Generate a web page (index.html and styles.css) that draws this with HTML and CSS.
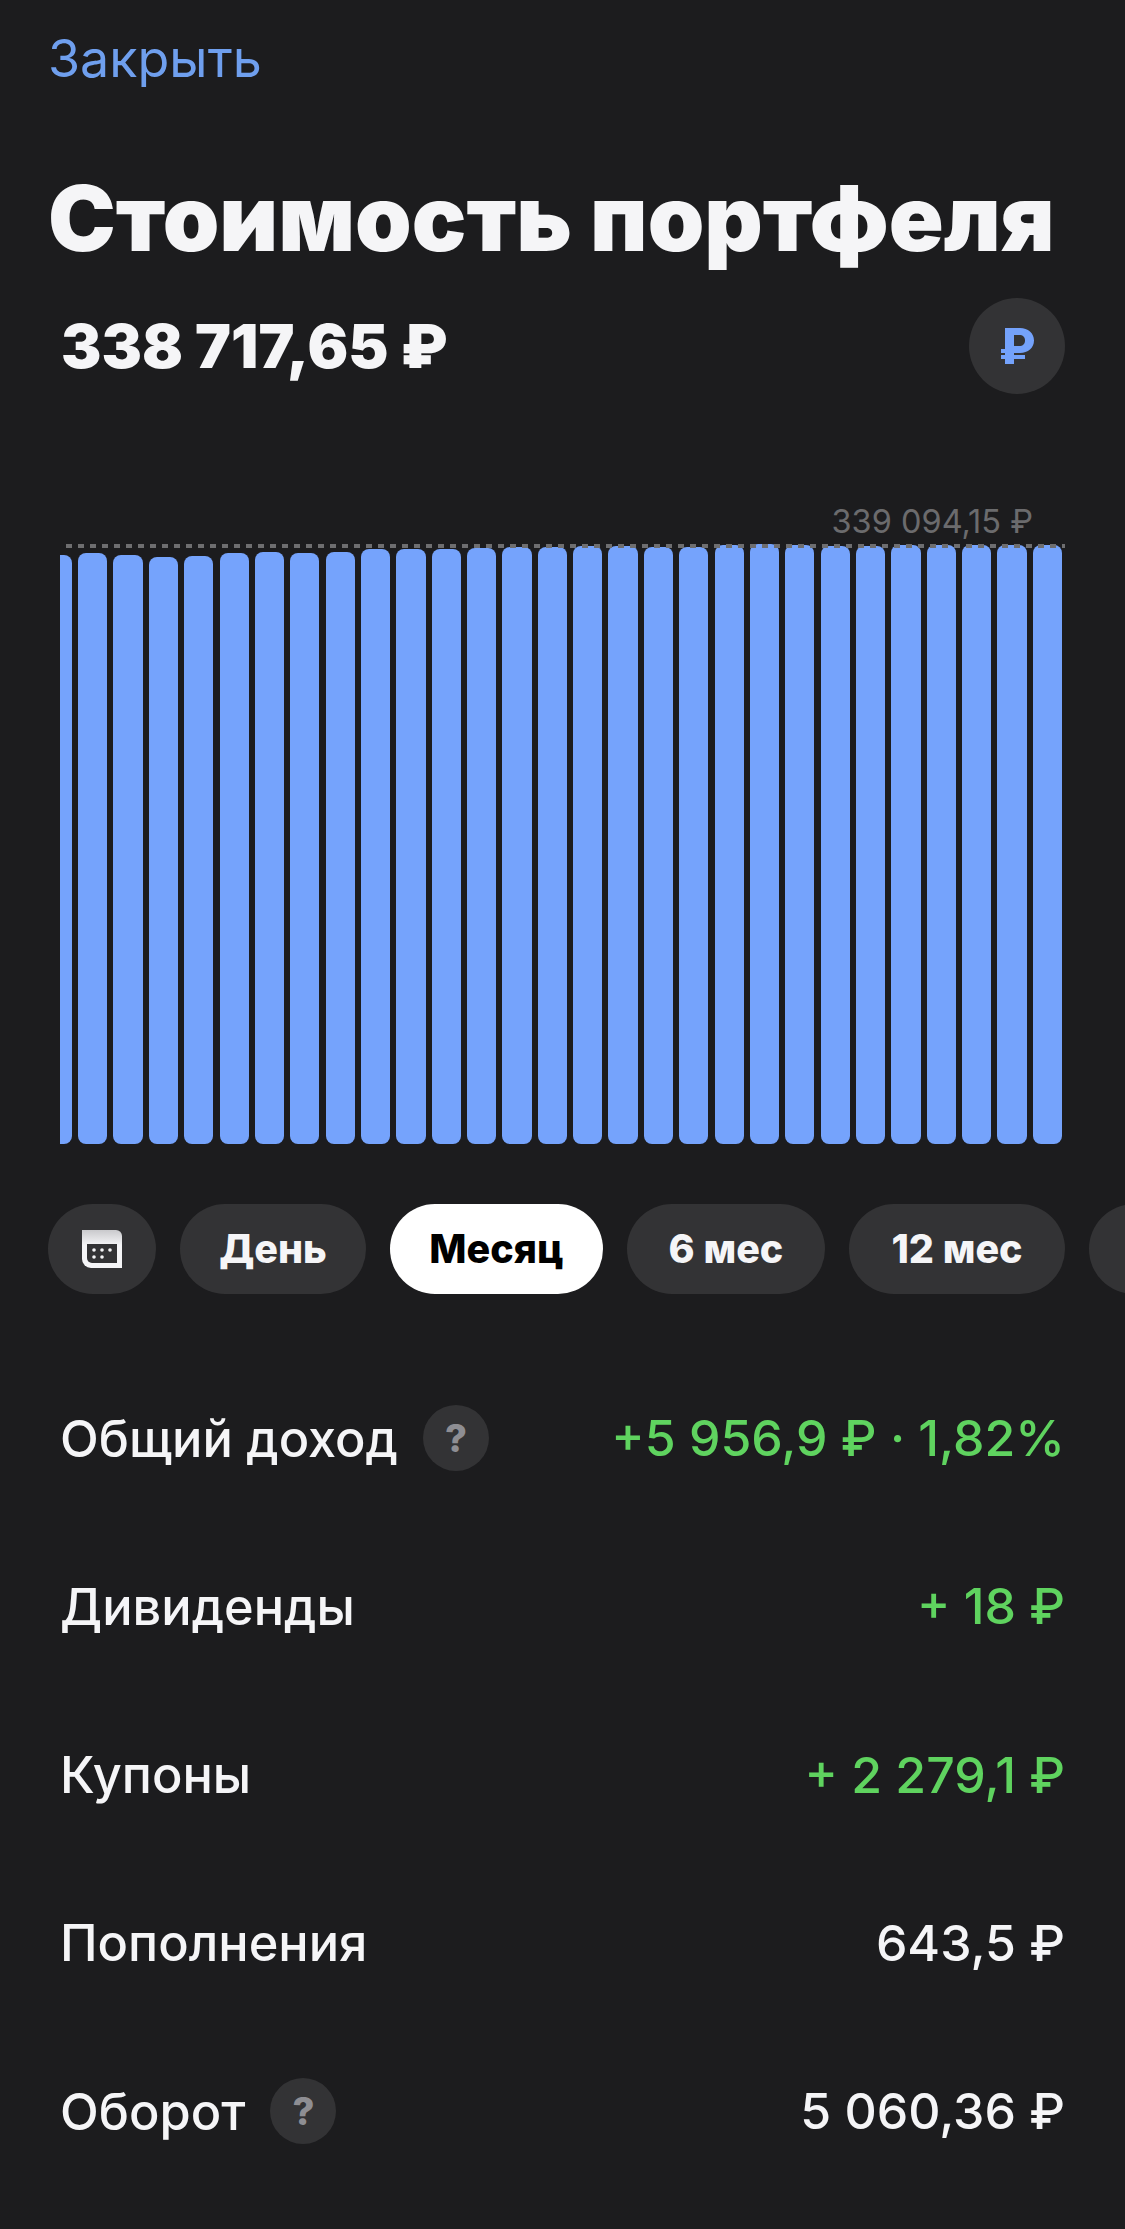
FILE: index.html
```html
<!DOCTYPE html>
<html lang="ru">

<head>
    <meta charset="utf-8">
    <title>Стоимость портфеля</title>
    <link rel="stylesheet" href="styles.css">
</head>

<body>
    <div class="page">
        <div class="top-bar"><span class="close-link">Закрыть</span></div>

        <h1 class="title">Стоимость портфеля</h1>

        <div class="summary">
            <span class="summary-value">338 717,65 ₽</span>
            <span class="currency-btn">
                <svg width="33" height="36" viewBox="0 0 33 36">
                    <path fill="#74a2fb" fill-rule="evenodd" d="M4 0h15c8 0 14 5 14 12.500S27 25 19 25h-6v2h11v4H13v5H4v-5H0v-4h4v-2H0v-4h4zM13 7v11h5c4 0 6-2 6-5.500S22 7 18 7z"/>
                </svg>
            </span>
        </div>

        <div class="chart-label">339 094,15 ₽</div>
        <div class="chart">
            <div class="bars">
                <div class="bar" style="height: 589px"></div>
                <div class="bar" style="height: 591px"></div>
                <div class="bar" style="height: 589px"></div>
                <div class="bar" style="height: 587px"></div>
                <div class="bar" style="height: 588.500px"></div>
                <div class="bar" style="height: 591px"></div>
                <div class="bar" style="height: 592px"></div>
                <div class="bar" style="height: 591px"></div>
                <div class="bar" style="height: 592px"></div>
                <div class="bar" style="height: 595px"></div>
                <div class="bar" style="height: 595px"></div>
                <div class="bar" style="height: 595px"></div>
                <div class="bar" style="height: 596px"></div>
                <div class="bar" style="height: 597px"></div>
                <div class="bar" style="height: 597px"></div>
                <div class="bar" style="height: 598px"></div>
                <div class="bar" style="height: 598px"></div>
                <div class="bar" style="height: 597px"></div>
                <div class="bar" style="height: 597px"></div>
                <div class="bar" style="height: 599px"></div>
                <div class="bar" style="height: 600px"></div>
                <div class="bar" style="height: 599px"></div>
                <div class="bar" style="height: 598px"></div>
                <div class="bar" style="height: 598px"></div>
                <div class="bar" style="height: 599px"></div>
                <div class="bar" style="height: 599px"></div>
                <div class="bar" style="height: 599px"></div>
                <div class="bar" style="height: 599px"></div>
                <div class="bar" style="height: 599px"></div>
            </div>
            <div class="max-line"></div>
        </div>

        <div class="periods">
            <div class="pill pill-icon">
                <svg width="40" height="38" viewBox="0 0 40 38">
                    <defs>
                        <linearGradient id="calTop" x1="0" y1="0" x2="0" y2="1">
                            <stop offset="0" stop-color="#c9c9cc"/>
                            <stop offset="0.4" stop-color="#f5f5f7"/>
                        </linearGradient>
                    </defs>
                    <path fill="url(#calTop)" d="M0 0h34a6 6 0 0 1 6 6v32H9a9 9 0 0 1-9-9z"/>
                    <path fill="#333335" d="M5 14h30v19H10a5 5 0 0 1-5-5z"/>
                    <g fill="#f5f5f7">
                        <circle cx="12" cy="20" r="1.800"/>
                        <circle cx="20" cy="20" r="1.800"/>
                        <circle cx="28" cy="20" r="1.800"/>
                        <circle cx="12" cy="27" r="1.800"/>
                        <circle cx="20" cy="27" r="1.800"/>
                    </g>
                </svg>
            </div>
            <div class="pill pill-day">День</div>
            <div class="pill pill-month active">Месяц</div>
            <div class="pill pill-six">6 мес</div>
            <div class="pill pill-year">12 мес</div>
            <div class="pill pill-rest"></div>
        </div>

        <div class="stats">
            <div class="row">
                <div class="row-name">Общий доход <span class="hint">?</span></div>
                <div class="row-value green">+5 956,9 ₽ · 1,82%</div>
            </div>
            <div class="row">
                <div class="row-name">Дивиденды</div>
                <div class="row-value green">+ 18 ₽</div>
            </div>
            <div class="row">
                <div class="row-name">Купоны</div>
                <div class="row-value green">+ 2 279,1 ₽</div>
            </div>
            <div class="row">
                <div class="row-name">Пополнения</div>
                <div class="row-value">643,5 ₽</div>
            </div>
            <div class="row">
                <div class="row-name">Оборот <span class="hint">?</span></div>
                <div class="row-value">5 060,36 ₽</div>
            </div>
        </div>
    </div>
</body>

</html>
```

FILE: styles.css
```css
html, body {
    margin: 0;
    padding: 0;
    background-color: #1c1c1e;
}

.page {
    width: 1125px;
    height: 2229px;
    overflow: hidden;
    color: #f5f5f7;
    font-family: Inter, "Liberation Sans", sans-serif;
}

.top-bar {
    height: 116px;
    padding-left: 48px;
    display: flex;
    align-items: center;
}

.close-link {
    color: #6f9fee;
    font-size: 52px;
}

.title {
    margin: 52px 0 0 48px;
    height: 100px;
    line-height: 100px;
    font-size: 90.700px;
    font-weight: 900;
    white-space: nowrap;
}

.summary {
    margin-top: 30px;
    padding: 0 60px 0 61px;
    height: 96px;
    display: flex;
    justify-content: space-between;
    align-items: center;
}

.summary-value {
    font-size: 60.500px;
    font-weight: 900;
}

.currency-btn {
    width: 96px;
    height: 96px;
    border-radius: 50%;
    background-color: #333335;
    display: flex;
    justify-content: center;
    align-items: center;
}

.chart-label {
    margin-top: 106px;
    height: 44px;
    line-height: 44px;
    padding-right: 92px;
    text-align: right;
    font-size: 32.500px;
    color: #6b6b6d;
}

.chart {
    position: relative;
    height: 600px;
    margin-left: 60px;
    width: 1005px;
    overflow: hidden;
}

.bars {
    width: 1019.300px;
    height: 100%;
    margin-left: -17.300px;
    display: flex;
    align-items: flex-end;
    gap: 6.150px;
}

.bar {
    flex: 1;
    background-color: #75a3fc;
    border-radius: 8px;
}

.max-line {
    position: absolute;
    top: 0;
    left: 6px;
    right: 0;
    height: 4px;
    background-image: repeating-linear-gradient(to right, #6e6e70 0, #6e6e70 6px, transparent 6px, transparent 12px);
}

.periods {
    margin-top: 60px;
    padding-left: 48px;
    display: flex;
    gap: 24px;
}

.pill {
    flex: none;
    height: 90px;
    border-radius: 45px;
    background-color: #333335;
    display: flex;
    justify-content: center;
    align-items: center;
    font-size: 39.500px;
    font-weight: 800;
}

.pill-icon {
    width: 108px;
}

.pill-day {
    width: 186px;
}

.pill-month {
    width: 213px;
}

.pill-six {
    width: 198px;
}

.pill-year {
    width: 216px;
}

.pill-rest {
    width: 120px;
}

.active {
    background-color: #ffffff;
    color: #000000;
}

.stats {
    margin-top: 60px;
    padding: 0 60px;
}

.row {
    height: 168.250px;
    display: flex;
    justify-content: space-between;
    align-items: center;
    font-size: 50.500px;
    font-weight: 500;
}

.row-name {
    display: flex;
    align-items: center;
    gap: 25px;
}

.row-value {
    font-size: 50px;
}

.hint {
    width: 66px;
    height: 66px;
    border-radius: 50%;
    background-color: #333335;
    color: #8e8e93;
    font-size: 38px;
    font-weight: 800;
    display: flex;
    justify-content: center;
    align-items: center;
}

.green {
    color: #5fd35f;
}
```
